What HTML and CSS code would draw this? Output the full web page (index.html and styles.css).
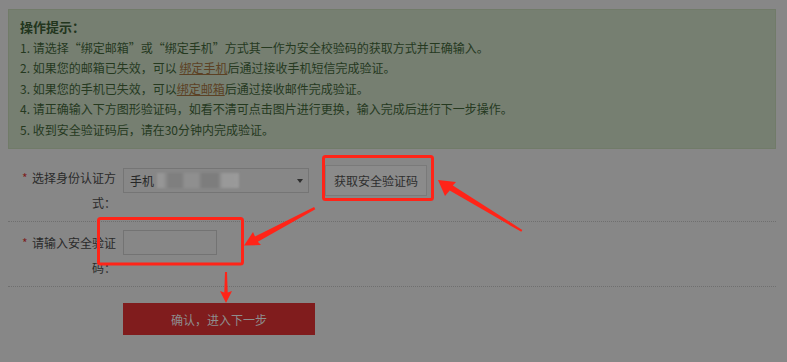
FILE: index.html
```html
<!DOCTYPE html>
<html lang="zh-CN">
<head>
<meta charset="utf-8">
<title>安全验证</title>
<link rel="stylesheet" href="styles.css">
</head>
<body>
<div class="page">
  <div class="tips">
    <div class="tips-title">操作提示：</div>
    <div class="tip">1. 请选择“绑定邮箱”或“绑定手机”方式其一作为安全校验码的获取方式并正确输入。</div>
    <div class="tip">2. 如果您的邮箱已失效，可以 <a class="link" href="#">绑定手机</a>后通过接收手机短信完成验证。</div>
    <div class="tip">3. 如果您的手机已失效，可以<a class="link" href="#">绑定邮箱</a>后通过接收邮件完成验证。</div>
    <div class="tip">4. 请正确输入下方图形验证码，如看不清可点击图片进行更换，输入完成后进行下一步操作。</div>
    <div class="tip">5. 收到安全验证码后，请在30分钟内完成验证。</div>
  </div>

  <div class="form">
    <div class="row">
      <div class="label"><span class="star">*</span><span class="label-text">选择身份认证方式：</span></div>
      <div class="controls">
        <div class="select"><span class="sel-text">手机</span><span class="mask"></span><span class="caret"></span></div>
        <button class="btn-code" type="button">获取安全验证码</button>
      </div>
    </div>
    <div class="row">
      <div class="label"><span class="star">*</span><span class="label-text">请输入安全验证码：</span></div>
      <div class="controls controls-input">
        <input class="code-input" type="text">
      </div>
    </div>
    <div class="submit-wrap">
      <button class="btn-submit" type="button">确认，进入下一步</button>
    </div>
  </div>

  <svg class="annot" width="787" height="362" viewBox="0 0 787 362" xmlns="http://www.w3.org/2000/svg">
    <rect x="323.5" y="156.5" width="109" height="43" rx="2" fill="none" stroke="#ff2418" stroke-width="3"/>
    <rect x="98.5" y="218.5" width="144" height="45.5" rx="2" fill="none" stroke="#ff2418" stroke-width="3"/>
    <polygon fill="#ff2418" points="438,180 456,182 452.8,185.5 522.3,230 521.3,231.8 449.7,190.6 445,196"/>
    <polygon fill="#ff2418" points="244,245.5 253,232 255,236.4 314.1,207 315.3,209.2 257.8,241.7 261,245"/>
    <polygon fill="#ff2418" points="226,303 220,291 224.3,292.5 225,272 227,272 227.7,292.5 232,291"/>
  </svg>
</div>
</body>
</html>
```

FILE: styles.css
```css
html, body {
  margin: 0;
  padding: 0;
  background: #878787;
}

body {
  font-family: "Noto Sans CJK SC", "Noto Sans", sans-serif;
  font-size: 12px;
  color: #2b2b2b;
}

.page {
  position: relative;
  width: 787px;
  height: 362px;
  padding: 9px 11px 0 8px;
  box-sizing: border-box;
  overflow: hidden;
}

.tips {
  background: #767f71;
  border: 1px solid #717b69;
  padding: 7px 12px 8px 11px;
  color: #25391f;
  line-height: 20.5px;
}

.tips-title {
  font-weight: bold;
  font-size: 13px;
  color: #22351d;
}

.link {
  color: #5c4124;
  text-decoration: underline;
}

.form {
  margin-top: 8px;
}

.row {
  display: flex;
  align-items: flex-start;
  padding: 9px 0 6px;
  border-bottom: 1px dotted #6f6f6f;
}

.label {
  display: flex;
  width: 108px;
  box-sizing: border-box;
  padding-left: 12px;
  line-height: 24.5px;
  color: #2a2a2a;
  flex-shrink: 0;
}

.star {
  width: 11px;
  flex-shrink: 0;
  padding-left: 2px;
  box-sizing: border-box;
  color: #7d1f1f;
  font-size: 12px;
}

.label-text {
  width: 85px;
  flex-shrink: 0;
  text-align: right;
}

.controls {
  display: flex;
  align-items: center;
  height: 31px;
  margin-top: -1px;
  margin-left: 7px;
}

.controls-input {
  height: 25px;
  margin-top: -1px;
}

.select {
  position: relative;
  display: flex;
  align-items: center;
  width: 186px;
  height: 25px;
  box-sizing: border-box;
  border: 1px solid #757575;
  padding-left: 6px;
  color: #262626;
}

.sel-text {
  line-height: 23px;
}

.mask {
  display: block;
  width: 82px;
  height: 15px;
  margin-left: 3px;
  background: linear-gradient(to right, #979797 0, #959595 8%, #7f7f7f 14%, #7f7f7f 30%, #8f8f8f 34%, #8f8f8f 50%, #7d7d7d 55%, #7d7d7d 74%, #999999 80%, #9a9a9a 100%);
  filter: blur(1.2px);
}

.caret {
  position: absolute;
  right: 5px;
  top: 10px;
  width: 0;
  height: 0;
  border-left: 3px solid transparent;
  border-right: 3px solid transparent;
  border-top: 4px solid #2e2e2e;
}

.btn-code {
  width: 102px;
  height: 31px;
  margin-left: 16px;
  box-sizing: border-box;
  border: 1px solid #7a7a7a;
  background: #8b8b8b;
  color: #2e2e2e;
  font-family: inherit;
  font-size: 12px;
  padding: 0;
}

.code-input {
  width: 94px;
  height: 25px;
  box-sizing: border-box;
  border: 1px solid #737373;
  background: #878787;
  margin: 0;
  padding: 0 4px;
  outline: none;
}

.submit-wrap {
  padding-top: 16px;
  padding-left: 115px;
}

.btn-submit {
  width: 192px;
  height: 32px;
  border: none;
  background: #801c1d;
  color: #8e8e8e;
  font-family: inherit;
  font-size: 12px;
  padding: 0;
}

.annot {
  position: absolute;
  left: 0;
  top: 0;
  pointer-events: none;
}
```
